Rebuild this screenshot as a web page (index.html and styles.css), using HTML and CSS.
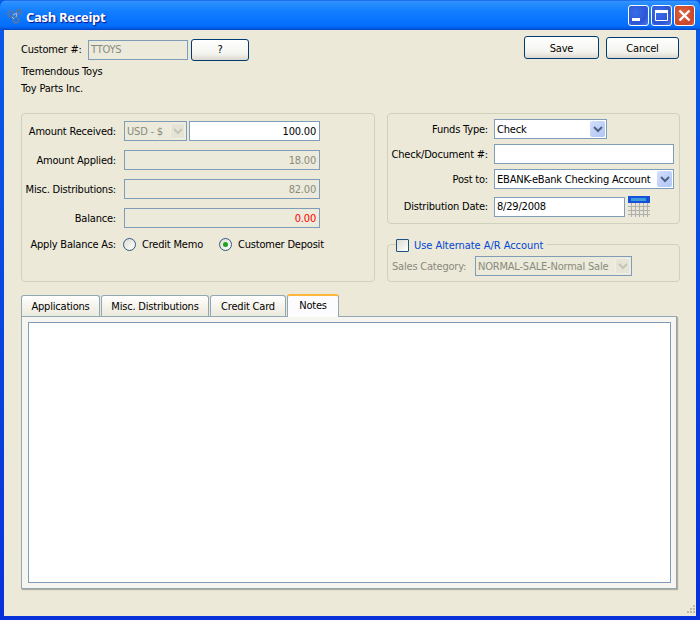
FILE: index.html
```html
<!DOCTYPE html>
<html lang="en">
<head>
<meta charset="utf-8">
<title>Cash Receipt</title>
<link rel="stylesheet" href="styles.css">
</head>
<body>
<div class="window">
  <header class="titlebar">
    <svg class="app-icon" width="18" height="18" viewBox="0 0 18 18"><g fill="none" stroke="#4f76ad" stroke-width="2"><circle cx="5" cy="7" r="2.8"/><circle cx="13" cy="5" r="2.3"/><circle cx="10" cy="13" r="2.8"/></g><g stroke="#a9c4e8" stroke-width="1"><path d="M7 8l4-2M6 10l2 2M11 7l-1 3"/></g></svg>
    <div class="title">Cash Receipt</div>
    <div class="winbtn win-blue"><svg width="21" height="21" viewBox="0 0 21 21"><rect x="4" y="13" width="8" height="3" fill="#fff"/></svg></div>
    <div class="winbtn win-blue"><svg width="21" height="21" viewBox="0 0 21 21"><path d="M4.5 5.5h12v10h-12z" fill="none" stroke="#fff"/><rect x="4" y="5" width="13" height="3" fill="#fff"/></svg></div>
    <div class="winbtn win-red"><svg width="21" height="21" viewBox="0 0 21 21"><path d="M5.5 5.5l10 10M15.5 5.5l-10 10" stroke="#fff" stroke-width="2.4"/></svg></div>
  </header>
  <main class="content">
    <section class="top">
      <div class="customer">
        <div class="customer-row">
          <span class="label customer-label">Customer #:</span>
          <div class="field disabled customer-field">TTOYS</div>
          <div class="button query">?</div>
        </div>
        <div class="customer-name first">Tremendous Toys</div>
        <div class="customer-name">Toy Parts Inc.</div>
      </div>
      <div class="actions">
        <div class="button save">Save</div>
        <div class="button cancel">Cancel</div>
      </div>
    </section>

    <section class="groups">
      <div class="group amounts">
        <div class="row">
          <span class="label amt-label">Amount Received:</span>
          <div class="field disabled currency">USD - $<span class="arrow arrow-off"><svg width="10" height="7" viewBox="0 0 10 7"><path d="M1 1l4 4 4-4" fill="none" stroke="#c4c4b8" stroke-width="2"/></svg></span></div>
          <div class="field amount-in">100.00</div>
        </div>
        <div class="row">
          <span class="label amt-label">Amount Applied:</span>
          <div class="field disabled amount">18.00</div>
        </div>
        <div class="row">
          <span class="label amt-label">Misc. Distributions:</span>
          <div class="field disabled amount">82.00</div>
        </div>
        <div class="row">
          <span class="label amt-label">Balance:</span>
          <div class="field disabled amount balance">0.00</div>
        </div>
        <div class="radio-row">
          <span class="label amt-label">Apply Balance As:</span>
          <span class="radio"></span><span class="radio-text memo">Credit Memo</span>
          <span class="radio checked"></span><span class="radio-text">Customer Deposit</span>
        </div>
      </div>

      <div class="side">
        <div class="group funds">
          <div class="frow frow-a">
            <span class="label fund-label">Funds Type:</span>
            <div class="field select funds-type">Check<span class="arrow"><svg width="10" height="7" viewBox="0 0 10 7"><path d="M1 1l4 4 4-4" fill="none" stroke="#4d6185" stroke-width="2"/></svg></span></div>
          </div>
          <div class="frow frow-a">
            <span class="label fund-label">Check/Document #:</span>
            <div class="field wide"></div>
          </div>
          <div class="frow frow-b">
            <span class="label fund-label">Post to:</span>
            <div class="field select wide">EBANK-eBank Checking Account<span class="arrow"><svg width="10" height="7" viewBox="0 0 10 7"><path d="M1 1l4 4 4-4" fill="none" stroke="#4d6185" stroke-width="2"/></svg></span></div>
          </div>
          <div class="frow">
            <span class="label fund-label">Distribution Date:</span>
            <div class="field date">8/29/2008</div>
            <svg class="calendar" width="22" height="21" viewBox="0 0 22 21"><rect width="22" height="21" fill="#e8e6da"/><rect width="22" height="7" fill="#1450d8"/><rect x="3" y="2" width="15" height="3" fill="#3f9ad8"/><path d="M0 10.5h22M0 14.5h22M0 18.5h22M3.5 7v14M7.5 7v14M11.5 7v14M15.5 7v14M19.5 7v14" stroke="#b0b0a8"/></svg>
          </div>
        </div>
        <div class="group alt">
          <div class="legend"><span class="check"></span><span class="legend-text">Use Alternate A/R Account</span></div>
          <div class="frow">
            <span class="sales-label">Sales Category:</span>
            <div class="field disabled sales">NORMAL-SALE-Normal Sale<span class="arrow arrow-off"><svg width="10" height="7" viewBox="0 0 10 7"><path d="M1 1l4 4 4-4" fill="none" stroke="#c4c4b8" stroke-width="2"/></svg></span></div>
          </div>
        </div>
      </div>
    </section>

    <nav class="tabs">
      <div class="tab tab-apps">Applications</div>
      <div class="tab tab-misc">Misc. Distributions</div>
      <div class="tab tab-card">Credit Card</div>
      <div class="tab active">Notes</div>
    </nav>
    <section class="pane"><div class="notes"></div></section>
  </main>
  <svg class="grip" width="12" height="12" viewBox="0 0 12 12"><path d="M9 1h2v2H9zM6 4h2v2H6zM9 4h2v2H9zM3 7h2v2H3zM6 7h2v2H6zM9 7h2v2H9z" fill="#bdbaa5"/></svg>
</div>
</body>
</html>
```
FILE: styles.css
```css
* { box-sizing: border-box; }
html, body { margin: 0; padding: 0; }
body { font: 11px/13px "DejaVu Sans", sans-serif; font-stretch: condensed; letter-spacing: -0.2px; color: #000; }

.window {
  position: relative;
  width: 700px;
  height: 620px;
  display: flex;
  flex-direction: column;
  background: linear-gradient(#0a5be6, #0831d9);
  padding: 0 4px 4px;
  overflow: hidden;
}
.titlebar {
  height: 30px;
  margin: 0 -4px;
  padding: 5px 5px 4px 6px;
  display: flex;
  align-items: center;
  gap: 2px;
  border-radius: 7px 7px 0 0;
  background: linear-gradient(#0058e6 0, #3a93ff 4%, #288eff 10%, #127dff 40%, #036ffc 85%, #0262ee 92%, #0057d5 96%, #0043cf 100%);
}
.app-icon { flex: none; }
.title {
  flex: 1;
  margin-top: 2px;
  color: #fff;
  font: bold 13px/16px "Open Sans", sans-serif;
  letter-spacing: -0.3px;
  text-shadow: 1px 1px 1px #0f1089;
}
.winbtn {
  width: 21px;
  height: 21px;
  border: 1px solid #fff;
  border-radius: 3px;
  display: flex;
  align-items: center;
  justify-content: center;
}
.winbtn svg { margin: -1px; flex: none; }
.win-blue { background: radial-gradient(circle at 35% 35%, #3a6ee8, #2b55d6 60%, #4a78ee); }
.win-red { background: radial-gradient(circle at 40% 40%, #e0663e, #c8452a 70%, #d96a4a); }

.content {
  flex: 1;
  min-height: 0;
  background: #ece9d8;
  padding: 6px 17px 0 17px;
  display: flex;
  flex-direction: column;
}

.top { height: 77px; display: flex; justify-content: space-between; }
.customer-row { display: flex; align-items: center; margin-top: 3px; height: 21px; }
.customer-label { width: 67px; text-align: left; }
.customer-field { width: 100px; height: 21px; }
.customer-name { height: 17px; line-height: 17px; }
.customer-name.first { margin-top: 3px; }
.actions { display: flex; align-items: flex-start; gap: 7px; }

.button {
  height: 22px;
  border: 1px solid #003c74;
  border-radius: 3px;
  background: linear-gradient(#fff, #f3f3ee 70%, #dcd8ce);
  display: flex;
  align-items: center;
  justify-content: center;
}
.query { width: 58px; margin-left: 3px; }
.save { width: 75px; height: 23px; padding-top: 1px; }
.cancel { width: 73px; height: 22px; margin-top: 1px; }

.field {
  height: 20px;
  padding: 0 2px;
  border: 1px solid #7f9db9;
  background: #fff;
  display: flex;
  align-items: center;
  white-space: nowrap;
}
.disabled { background: #ebeadb; color: #8a8a7c; }
.label { white-space: nowrap; }
.arrow {
  margin-left: auto;
  margin-right: -1px;
  width: 15px;
  height: 16px;
  flex: none;
  border-radius: 2px;
  background: linear-gradient(135deg, #d2defb, #b0c6f5);
  display: flex;
  align-items: center;
  justify-content: center;
}
.arrow-off { background: #e6e4d6; border: 1px solid #f0efe6; }

.groups { display: grid; grid-template-columns: 354px 293px; column-gap: 12px; }
.group { border: 1px solid #d0d0bf; border-radius: 4px; }
.amounts { height: 169px; padding: 7px 0 0 0; }
.row { display: flex; align-items: center; margin-bottom: 9px; }
.amt-label { width: 94px; text-align: right; margin-right: 8px; flex: none; }
.currency { width: 63px; }
.amount-in { width: 131px; margin-left: 2px; justify-content: flex-end; padding-right: 3px; }
.amount { width: 196px; justify-content: flex-end; padding-right: 3px; }
.balance { color: #f00; }
.radio-row { display: flex; align-items: center; height: 14px; margin-top: 9px; }
.radio-row .amt-label { margin-right: 7px; }
.radio {
  width: 13px;
  height: 13px;
  flex: none;
  border: 1px solid #2f5a82;
  border-radius: 50%;
  background: linear-gradient(135deg, #dcdcd0, #fff);
  display: flex;
  align-items: center;
  justify-content: center;
}
.radio.checked::after { content: ""; width: 5px; height: 5px; border-radius: 50%; background: #21a121; }
.radio-text { margin-left: 6px; }
.memo { width: 77px; }

.side { display: flex; flex-direction: column; gap: 20px; }
.funds { height: 111px; padding: 5px 0 0 0; }
.frow { display: flex; align-items: center; }
.frow-a { margin-bottom: 5px; }
.frow-b { margin-bottom: 7px; }
.fund-label { width: 100px; text-align: right; margin-right: 6px; flex: none; }
.funds-type { width: 113px; }
.wide { width: 180px; }
.date { width: 131px; }
.calendar { margin-left: 3px; flex: none; }

.alt { position: relative; height: 38px; padding: 11px 0 0 4px; }
.legend {
  position: absolute;
  left: 8px;
  top: -7px;
  padding-right: 3px;
  height: 14px;
  background: #ece9d8;
  display: flex;
  align-items: center;
}
.check { width: 13px; height: 13px; border: 1px solid #1c5180; border-radius: 1px; background: linear-gradient(135deg, #dcdcd0, #fff); }
.legend-text { margin-left: 5px; color: #0046d5; letter-spacing: -0.05px; }
.sales-label { color: #8a8a7c; width: 83px; white-space: nowrap; flex: none; }
.sales { width: 157px; }

.tabs { display: flex; align-items: flex-end; gap: 1px; height: 22px; margin-top: 12px; position: relative; z-index: 1; }
.tab {
  height: 21px;
  border: 1px solid #91a7b4;
  border-bottom: 0;
  border-radius: 3px 3px 0 0;
  background: linear-gradient(#fff, #f3f1e8 60%, #ecebe0);
  display: flex;
  align-items: center;
  justify-content: center;
}
.tab-apps { width: 79px; }
.tab-misc { width: 108px; }
.tab-card { width: 76px; }
.active {
  width: 52px;
  height: 23px;
  margin-bottom: -1px;
  background: #fcfcfe;
  border-top: 2px solid #ffb53c;
  padding-bottom: 3px;
}
.pane {
  height: 273px;
  width: 656px;
  border: 1px solid #91a7b4;
  background: #f6f5f0;
  box-shadow: 1px 1px 1px #b0ae9f;
  padding: 5px 5px 5px 6px;
}
.notes { height: 100%; border: 1px solid #7f9db9; background: #fff; }
.grip { position: absolute; right: 4px; bottom: 4px; }
```
